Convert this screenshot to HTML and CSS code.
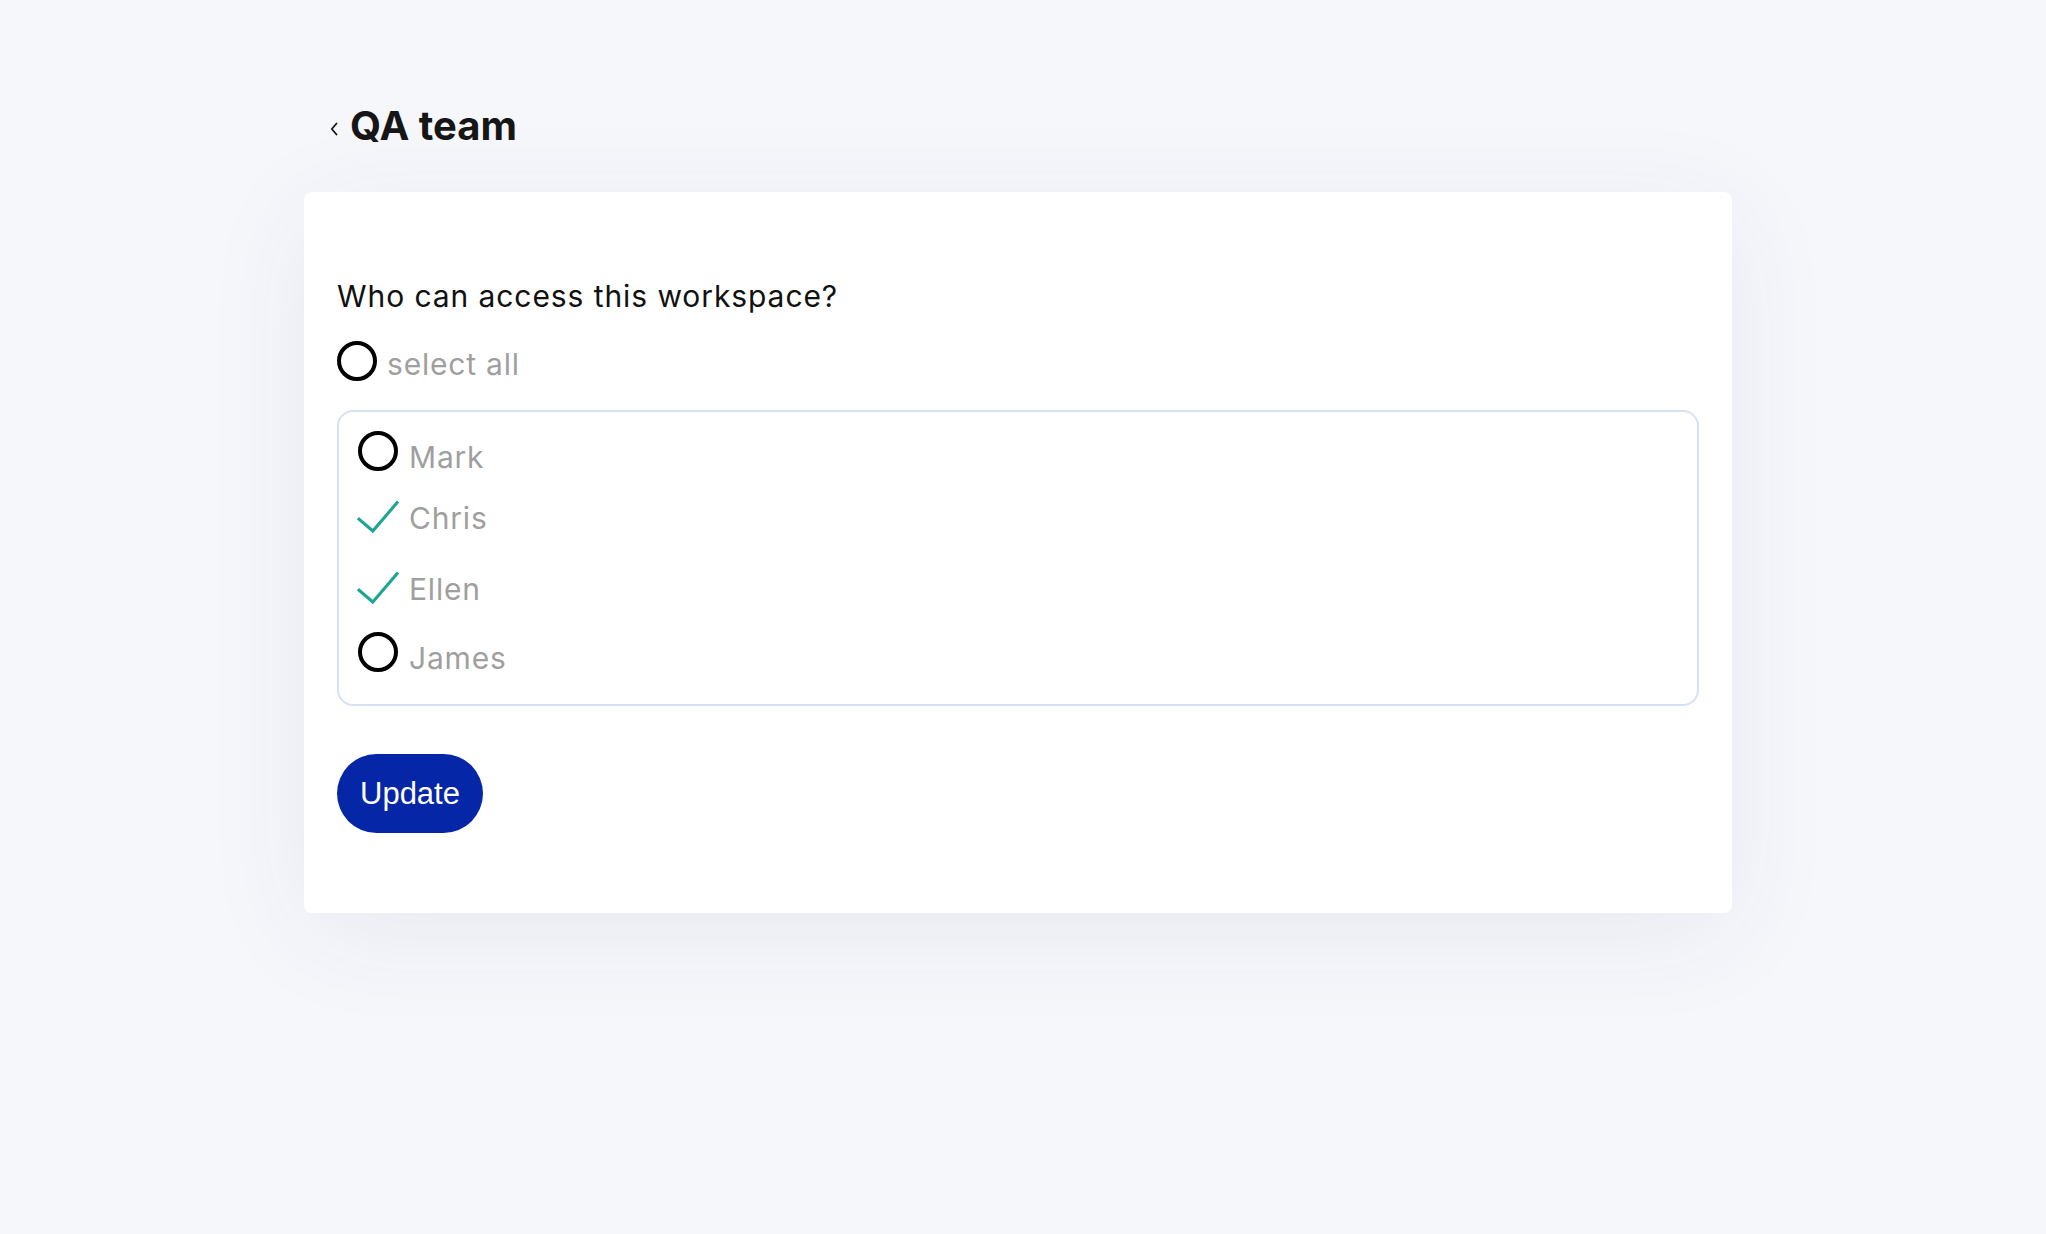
FILE: index.html
```html
<!DOCTYPE html>
<html lang="en">
<head>
<meta charset="utf-8">
<title>QA team</title>
<link rel="stylesheet" href="styles.css">
</head>
<body>
<div class="page">
  <header class="head">
    <a class="back" href="#" aria-label="Back">
      <svg width="8" height="14" viewBox="0 0 8 14"><polyline points="6.5,1.5 1.8,7 6.5,12.5" fill="none" stroke="#161616" stroke-width="1.8" stroke-linecap="round" stroke-linejoin="round"/></svg>
    </a>
    <h1 class="title">QA team</h1>
  </header>

  <section class="card">
    <p class="question">Who can access this workspace?</p>

    <label class="select-all">
      <span class="ring"></span>
      <span class="name">select all</span>
    </label>

    <div class="options">
      <label class="opt">
        <span class="ico"><span class="ring"></span></span>
        <span class="name">Mark</span>
      </label>
      <label class="opt on">
        <span class="ico"><svg class="tick" width="46" height="36" viewBox="0 0 46 36"><polyline points="1,19.3 17.3,33.3 45,1" fill="none" stroke="#1fa593" stroke-width="3.4"/></svg></span>
        <span class="name">Chris</span>
      </label>
      <label class="opt on">
        <span class="ico"><svg class="tick" width="46" height="36" viewBox="0 0 46 36"><polyline points="1,19.3 17.3,33.3 45,1" fill="none" stroke="#1fa593" stroke-width="3.4"/></svg></span>
        <span class="name">Ellen</span>
      </label>
      <label class="opt">
        <span class="ico"><span class="ring"></span></span>
        <span class="name">James</span>
      </label>
    </div>

    <button class="btn" type="button">Update</button>
  </section>
</div>
</body>
</html>
```

FILE: styles.css
```css
* { box-sizing: border-box; }

html, body {
  margin: 0;
  background: #f6f7fb;
}

body {
  padding: 102px 10px 0 0;
  font-family: Inter, "Noto Sans", sans-serif;
  color: #111;
  min-height: 1234px;
}

.page {
  width: 1428px;
  margin: 0 auto;
}

.head {
  display: flex;
  align-items: center;
  padding-left: 26px;
  height: 48px;
}

.back {
  display: flex;
  width: 8px;
  height: 14px;
  margin-top: 6px;
  margin-right: 12px;
}

.title {
  margin: 0;
  font-size: 40px;
  line-height: 48px;
  font-weight: 700;
  color: #161616;
}

.card {
  margin-top: 42px;
  background: #fff;
  border-radius: 8px;
  padding: 86px 33px 80px 33px;
  box-shadow: 0 20px 110px rgba(40, 50, 110, 0.07);
}

.question {
  margin: 0;
  font-size: 30px;
  line-height: 36px;
  letter-spacing: 0.92px;
  color: #111;
}

.select-all {
  display: flex;
  align-items: flex-start;
  gap: 10px;
  margin-top: 27px;
  height: 41px;
}

.ring {
  display: block;
  width: 40px;
  height: 40px;
  border: 4px solid #000;
  border-radius: 50%;
  flex: none;
}

.name {
  font-size: 30px;
  line-height: 36px;
  letter-spacing: 0.8px;
  color: #9f9f9f;
}

.select-all .name {
  margin-top: 5px;
}

.options {
  margin-top: 28px;
  border: 2px solid #d8e1f1;
  border-radius: 16px;
  padding: 17px 16px 15px 16px;
}

.opt {
  display: flex;
  align-items: flex-start;
  gap: 10px;
  height: 59px;
}

.opt.on {
  height: 71px;
}

.ico {
  width: 44px;
  display: flex;
  justify-content: center;
  flex: none;
}

.opt .ring {
  margin-top: 2px;
  margin-left: 2px;
}

.tick {
  display: block;
  margin-top: 11px;
  margin-left: 2px;
}

.opt .name {
  margin-top: 10px;
}

.opt.on .name {
  margin-top: 12px;
}

.btn {
  display: flex;
  align-items: center;
  margin-top: 48px;
  height: 79px;
  padding: 0 23px;
  border: none;
  border-radius: 40px;
  background: #0526a7;
  color: #fff;
  font-family: "Liberation Sans", Arial, sans-serif;
  font-size: 31px;
  cursor: pointer;
}
```
